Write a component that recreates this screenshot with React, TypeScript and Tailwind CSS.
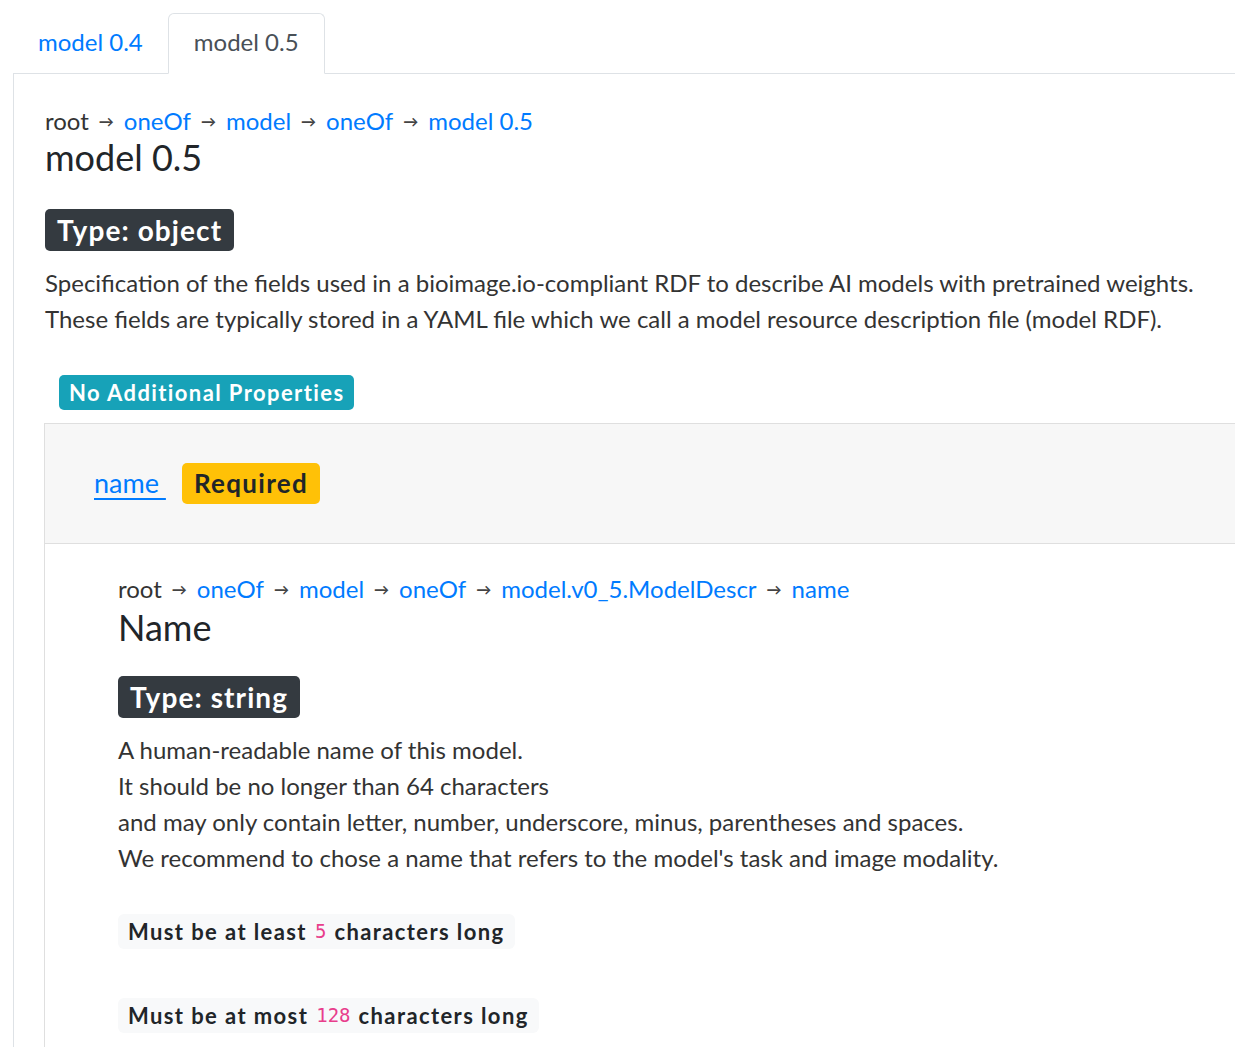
const FONT = "font-['Lato','Liberation_Sans',sans-serif]";

type Crumb = { label: string; link?: boolean };

function Breadcrumb({ items }: { items: Crumb[] }) {
  return (
    <div className="flex items-center h-[36px] text-[24px] leading-[36px]">
      {items.map((item, i) => (
        <span key={i} className="flex items-center">
          {i > 0 && <span className="mx-[10px] text-[15px] font-bold text-[#444]">→</span>}
          <span className={item.link ? 'text-[#007bff]' : 'text-[#333]'}>{item.label}</span>
        </span>
      ))}
    </div>
  );
}

function TypeBadge({ children }: { children: React.ReactNode }) {
  return (
    <span className="inline-flex items-center h-[42px] px-[12px] rounded-[5px] bg-[#343a40] text-white text-[28px] font-bold tracking-[1.1px]">
      {children}
    </span>
  );
}

function Restriction({ before, value, after }: { before: string; value: string; after: string }) {
  return (
    <div className="inline-flex items-center h-[35px] px-[10px] rounded-[6px] bg-[#f8f9fa] text-[22px] font-bold tracking-[1.4px] text-[#212529]">
      {before}
      <span className="mx-[8px] font-['DejaVu_Sans_Mono',monospace] font-normal tracking-normal text-[19px] text-[#e83e8c]">{value}</span>
      {after}
    </div>
  );
}

export default function App() {
  return (
    <div className={`w-[1235px] h-[1047px] overflow-hidden bg-white text-[#212529] ${FONT}`}>
      <div className="w-[1300px] pl-[13px] pt-[13px]">
        <nav className="flex border-b border-[#dee2e6] text-[24px]">
          <a className="flex items-center h-[60px] pb-[3px] px-[25px] text-[#007bff]" href="#">
            model 0.4
          </a>
          <a
            className="flex items-center h-[61px] -mb-px pb-[3px] px-[25px] border border-[#dee2e6] border-b-white rounded-t-[6px] bg-white text-[#495057]"
            href="#"
          >
            model 0.5
          </a>
        </nav>

        <div className="border-l border-[#dee2e6] rounded-bl-[6px] pl-[31px] pt-[29px]">
          <Breadcrumb
            items={[
              { label: 'root' },
              { label: 'oneOf', link: true },
              { label: 'model', link: true },
              { label: 'oneOf', link: true },
              { label: 'model 0.5', link: true },
            ]}
          />
          <h2 className="text-[36px] leading-[36px] pb-[4px] text-[#212529]">model 0.5</h2>

          <div className="mt-[30px]">
            <TypeBadge>Type: object</TypeBadge>
          </div>

          <div className="mt-[14px] text-[24px] leading-[36px] text-[#333]">
            <p>Specification of the fields used in a bioimage.io-compliant RDF to describe AI models with pretrained weights.</p>
            <p>These fields are typically stored in a YAML file which we call a model resource description file (model RDF).</p>
          </div>

          <div className="mt-[38px] pl-[14px]">
            <span className="inline-flex items-center h-[35px] px-[10px] rounded-[5px] bg-[#17a2b8] text-white text-[22px] font-bold tracking-[1.4px]">
              No Additional Properties
            </span>
          </div>

          <div className="mt-[13px] -ml-px border border-[#dfdfdf]">
            <div className="flex items-center gap-[16px] h-[120px] pl-[49px] bg-[#f7f7f7] border-b border-[#dfdfdf]">
              <a href="#" className="text-[27px] text-[#007bff] underline underline-offset-[5px]">
                name&nbsp;
              </a>
              <span className="inline-flex items-center h-[41px] px-[12px] rounded-[5px] bg-[#ffc107] text-[#212529] text-[26px] font-bold tracking-[1.3px]">
                Required
              </span>
            </div>

            <div className="pl-[73px] pt-[27px] pb-[40px]">
              <Breadcrumb
                items={[
                  { label: 'root' },
                  { label: 'oneOf', link: true },
                  { label: 'model', link: true },
                  { label: 'oneOf', link: true },
                  { label: 'model.v0_5.ModelDescr', link: true },
                  { label: 'name', link: true },
                ]}
              />
              <h3 className="text-[36px] leading-[40px] text-[#212529]">Name</h3>

              <div className="mt-[29px]">
                <TypeBadge>Type: string</TypeBadge>
              </div>

              <div className="mt-[14px] text-[24px] leading-[36px] text-[#333]">
                <p>A human-readable name of this model.</p>
                <p>It should be no longer than 64 characters</p>
                <p>and may only contain letter, number, underscore, minus, parentheses and spaces.</p>
                <p>We recommend to chose a name that refers to the model's task and image modality.</p>
              </div>

              <div className="mt-[38px] flex flex-col items-start gap-[49px]">
                <Restriction before="Must be at least" value="5" after="characters long" />
                <Restriction before="Must be at most" value="128" after="characters long" />
              </div>
            </div>
          </div>
        </div>
      </div>
    </div>
  );
}
